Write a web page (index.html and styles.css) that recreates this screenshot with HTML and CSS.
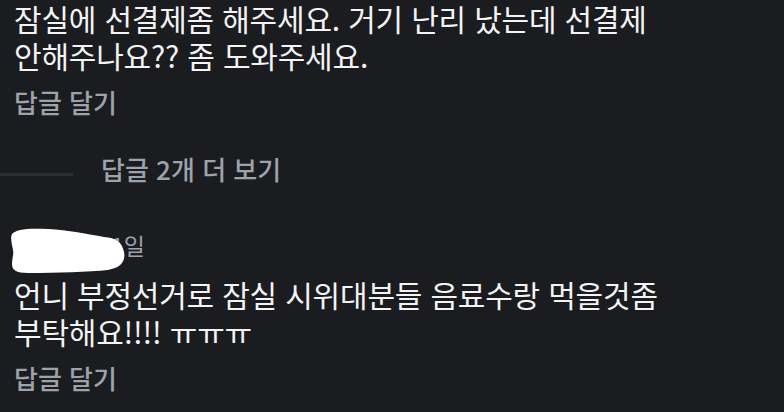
FILE: index.html
```html
<!DOCTYPE html>
<html lang="ko">
<head>
<meta charset="utf-8">
<link rel="stylesheet" href="styles.css">
</head>
<body>
<div class="thread">
  <div class="comment">
    <p class="text">잠실에 선결제좀 해주세요. 거기 난리 났는데 선결제<br>안해주나요?? 좀 도와주세요.</p>
    <div class="reply">답글 달기</div>
  </div>
  <div class="more">
    <span class="rule"></span>
    <span class="more-label">답글 2개 더 보기</span>
  </div>
  <div class="comment second">
    <div class="meta">
      <span class="name">사용자</span><span class="time">1일</span>
      <svg class="blob" width="118" height="46" viewBox="0 0 118 46"><path d="M4 6 C8 1 20 0 40 1 C60 2 80 6 96 9 C108 10 114 14 116 24 C118 34 112 40 100 42 C80 44 50 45 20 45 C8 45 4 42 4 36 C4 30 6 26 5 22 C4 16 2 10 4 6 Z" fill="#ffffff"/></svg>
    </div>
    <p class="text">언니 부정선거로 잠실 시위대분들 음료수랑 먹을것좀<br>부탁해요!!!! ㅠㅠㅠ</p>
    <div class="reply">답글 달기</div>
  </div>
</div>
</body>
</html>
```
FILE: styles.css
```css
html, body {
  margin: 0;
  padding: 0;
  background: #1a1c20;
  width: 784px;
  height: 412px;
  overflow: hidden;
}
body {
  font-family: "Noto Sans CJK KR", "Noto Sans", sans-serif;
  color: #f2f2f2;
}
.thread {
  padding: 0 0 0 14px;
}
.text {
  margin: 0;
  font-size: 30px;
  line-height: 37px;
  letter-spacing: -0.2px;
  color: #f4f4f4;
}
.reply {
  margin-top: 11px;
  font-size: 26px;
  line-height: 34px;
  font-weight: 500;
  color: #9ea2a9;
}
.more {
  display: flex;
  align-items: flex-start;
  margin-left: -14px;
  margin-top: 33px;
  height: 34px;
}
.rule {
  width: 73px;
  height: 3px;
  margin-top: 21px;
  background: #2b2e33;
}
.more-label {
  margin-left: 28px;
  font-size: 26px;
  line-height: 34px;
  font-weight: 500;
  color: #9ea2a9;
}
.second {
  margin-top: 43px;
}
.meta {
  position: relative;
  height: 32px;
  display: flex;
  font-size: 23px;
  line-height: 32px;
  color: #9ea2a9;
}
.name {
  width: 97px;
}
.blob {
  position: absolute;
  left: -6px;
  top: -1px;
}
.second .text {
  margin-top: 15px;
}
```
